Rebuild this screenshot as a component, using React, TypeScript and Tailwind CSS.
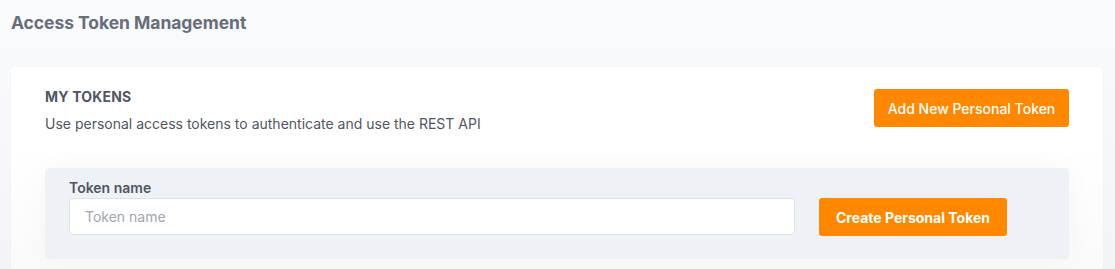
import React from "react";

export default function App() {
  return (
    <div
      className="min-h-[269px] w-full bg-gradient-to-b from-[#fafbfd] to-[#f3f4f8] px-[11px] pt-[11px]"
      style={{ fontFamily: "Inter, 'Noto Sans', sans-serif" }}
    >
      <h1 className="text-[17.5px] font-bold leading-[23px] text-[#676e79] tracking-[-0.05px]">
        Access Token Management
      </h1>
      <div className="mt-[33px] mr-[1px] rounded-[4px] bg-gradient-to-b from-white from-40% to-[#fafafa] px-[34px] pt-[21px] pb-[12px] shadow-[0_0_4px_rgba(0,0,0,0.02)]">
        <div className="flex items-start justify-between">
          <div>
            <div className="text-[14px] font-bold leading-[18px] text-[#505762] tracking-[0.2px]">
              MY TOKENS
            </div>
            <p className="mt-[9px] text-[14px] leading-[18px] text-[#505762]">
              Use personal access tokens to authenticate and use the REST API
            </p>
          </div>
          <button className="mt-[1px] h-[38px] w-[195px] rounded-[3px] bg-[#ff8800] text-[14px] font-medium text-white">
            Add New Personal Token
          </button>
        </div>
        <div className="mt-[35px] flex items-end rounded-[4px] bg-[#eef1f6] px-[24px] pt-[11px] pb-[23px] shadow-[0_0_30px_rgba(0,0,0,0.03)]">
          <div className="w-[726px] pb-[1px]">
            <label className="block text-[14px] font-semibold leading-[18px] text-[#4f5661]">
              Token name
            </label>
            <input
              placeholder="Token name"
              className="mt-[1px] h-[37px] w-full rounded-[4px] border border-[#dde1e8] bg-white px-[15px] text-[14px] text-[#374151] placeholder-[#a0a6b0] outline-none"
            />
          </div>
          <button className="ml-[24px] h-[38px] w-[188px] rounded-[3px] bg-[#ff8800] text-[14px] font-bold text-white">
            Create Personal Token
          </button>
        </div>
      </div>
    </div>
  );
}
